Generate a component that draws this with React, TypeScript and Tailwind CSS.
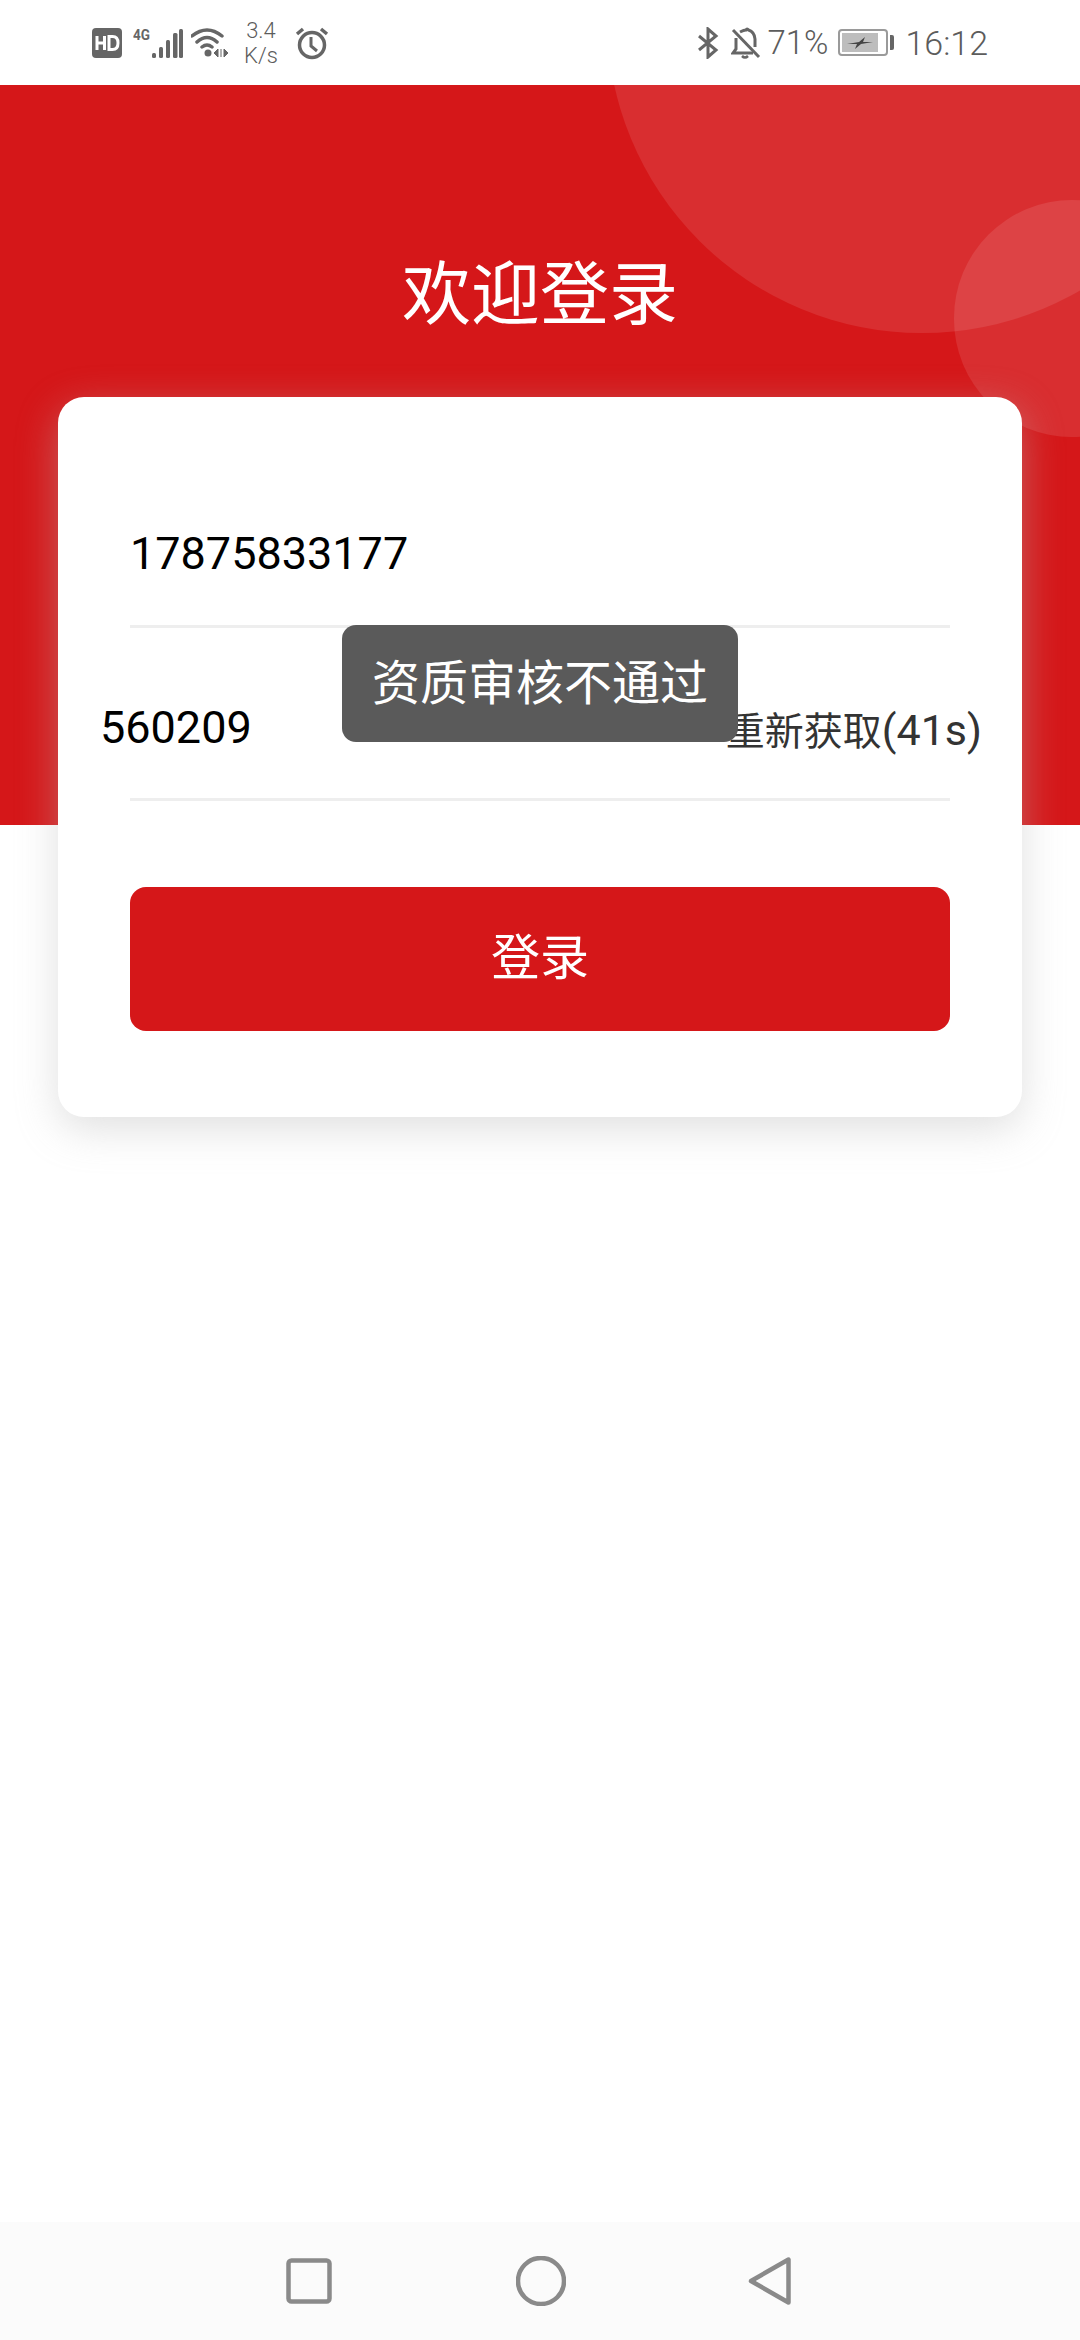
export default function App() {
  const cjk = "font-['Roboto','Noto_Sans_CJK_SC',sans-serif]";
  return (
    <div className={`relative flex h-[2340px] w-[1080px] flex-col overflow-hidden bg-white ${cjk}`}>
      {/* status bar */}
      <div className="flex h-[85px] shrink-0 items-center justify-between pl-[92px] pr-[92px] text-[#5c5c5c]">
        <div className="flex items-center">
          <svg width="30" height="30" viewBox="0 0 30 30">
            <rect width="30" height="30" rx="4" fill="#666" />
            <path d="M5 8v14M12.500 8v14M5 15h7.500" stroke="#fff" strokeWidth="3" fill="none" />
            <path d="M17 8.500h3.500q5.500 0 5.500 6.500t-5.500 6.500h-3.500z" stroke="#fff" strokeWidth="3" fill="none" />
          </svg>
          <svg width="50" height="32" viewBox="0 0 50 32" className="ml-[11px]">
            <text x="0" y="13" fontSize="15" fontWeight="700" fill="#666" fontFamily="Roboto" textLength="17" lengthAdjust="spacingAndGlyphs">4G</text>
            <rect x="19" y="26" width="4" height="5" rx="1.500" fill="#666" />
            <rect x="26" y="20" width="4" height="11" rx="1.500" fill="#666" />
            <rect x="33" y="13" width="4" height="18" rx="1.500" fill="#666" />
            <rect x="40" y="6" width="4.500" height="25" rx="1.500" fill="#666" />
            <rect x="46" y="2" width="4" height="29" rx="1.500" fill="#666" />
          </svg>
          <svg width="38" height="32" viewBox="0 0 38 32" className="ml-[8px]">
            <path d="M1 9Q16 -3 31 9M6 15Q16 6 26 15M11 20Q16 16 21 20" stroke="#666" strokeWidth="3.500" fill="none" strokeLinecap="round" />
            <circle cx="17" cy="26" r="3.500" fill="#666" />
            <path d="M27 22l-4 4 4 4zM30 22v8M33 22l4 4-4 4z" fill="#666" stroke="#666" strokeWidth="1" />
          </svg>
          <div className="ml-[15px] flex w-[34px] flex-col items-center text-[22px] font-light leading-[25px]">
            <span>3.4</span>
            <span>K/s</span>
          </div>
          <svg width="34" height="34" viewBox="0 0 34 34" className="ml-[17px]">
            <circle cx="17" cy="19" r="12.500" stroke="#666" strokeWidth="3.500" fill="none" />
            <path d="M16 11v9l6 5" stroke="#666" strokeWidth="3" fill="none" />
            <path d="M2 8l6-5M32 8l-6-5" stroke="#666" strokeWidth="3.500" fill="none" />
          </svg>
        </div>
        <div className="flex items-center">
          <svg width="22" height="32" viewBox="0 0 22 32">
            <path d="M2 9l17 14-8 7V2l8 7L2 23" stroke="#666" strokeWidth="3" fill="none" />
          </svg>
          <svg width="30" height="32" viewBox="0 0 30 32" className="ml-[12px]">
            <path d="M5 11v11l-3 4h20M9 5q4-2 6-2 1-2 2.500 0 6 2 6.500 9v8" stroke="#666" strokeWidth="3" fill="none" />
            <path d="M2 3l26 27" stroke="#666" strokeWidth="3" />
            <path d="M11 29q3 3 6 0" stroke="#666" strokeWidth="2.500" fill="none" />
          </svg>
          <span className="ml-[6px] text-[33px] font-light leading-none">71%</span>
          <div className="ml-[10px] flex items-center">
            <div className="flex h-[27px] w-[50px] items-center rounded-[4px] border-2 border-[#9a9a9a] p-[2px]">
              <div className="flex h-full w-[36px] items-center justify-center bg-[#bdbdbd]">
                <svg width="26" height="14" viewBox="0 0 26 14">
                  <path d="M0 8L12 6 18 1 16 6 26 6 14 8 8 13 10 8Z" fill="#444" />
                </svg>
              </div>
            </div>
            <div className="ml-[2px] h-[15px] w-[4px] rounded-r-[2px] bg-[#666666]" />
          </div>
          <span className="ml-[11px] text-[34px] font-light leading-none">16:12</span>
        </div>
      </div>

      {/* red header */}
      <div className="relative h-[740px] shrink-0 overflow-hidden bg-[#d51719]">
        <div className="absolute left-[607px] top-[-382px] h-[630px] w-[630px] rounded-full bg-white/10" />
        <div className="absolute left-[954px] top-[115px] h-[237px] w-[236px] rounded-full bg-white/10" />
        <h1 className="relative mt-[162px] text-center text-[69px] font-normal leading-[98px] text-white">欢迎登录</h1>
      </div>

      {/* card */}
      <div className="relative mx-[58px] mt-[-428px] rounded-[26px] bg-white px-[72px] pb-[86px] pt-[57px] shadow-[0_12px_40px_rgba(187,187,187,0.45)]">
        <div className="flex h-[174px] items-center border-b-[3px] border-[#eeeeee] pt-[28px] text-[45px] text-black">
          17875833177
        </div>
        <div className="h-[173px] border-b-[3px] border-[#eeeeee] pt-[30px]">
          <div className="ml-[-30px] mr-[-32px] flex h-full items-center justify-between">
            <span className="text-[45px] text-black">560209</span>
            <span className="pt-[4px] text-[39px] text-[#333333]">
              重新获取<span className="text-[43px]">(41s)</span>
            </span>
          </div>
        </div>
        <button className="mt-[86px] flex h-[144px] w-full items-center justify-center rounded-[16px] bg-[#d51719] text-[49px] text-white">
          登录
        </button>
      </div>

      {/* toast */}
      <div className="absolute left-[342px] top-[625px] flex h-[117px] w-[396px] items-center justify-center rounded-[14px] bg-[#5a5a5a] text-[48px] text-white">
        资质审核不通过
      </div>

      {/* nav bar */}
      <div className="mt-auto flex h-[118px] items-center bg-[#fbfbfb]">
        <div className="flex w-full items-center justify-center">
          <svg width="46" height="46" viewBox="0 0 46 46" className="ml-[-2px]">
            <rect x="2.500" y="2.500" width="41" height="41" rx="3" fill="none" stroke="#8a8a8a" strokeWidth="4.500" />
          </svg>
          <svg width="50" height="50" viewBox="0 0 50 50" className="ml-[184px]">
            <circle cx="25" cy="25" r="23" fill="none" stroke="#8a8a8a" strokeWidth="4.500" />
          </svg>
          <svg width="44" height="50" viewBox="0 0 44 50" className="ml-[182px]">
            <path d="M40.500 3.500V46.500L3 25z" fill="none" stroke="#8a8a8a" strokeWidth="4.500" strokeLinejoin="round" />
          </svg>
        </div>
      </div>
    </div>
  );
}
